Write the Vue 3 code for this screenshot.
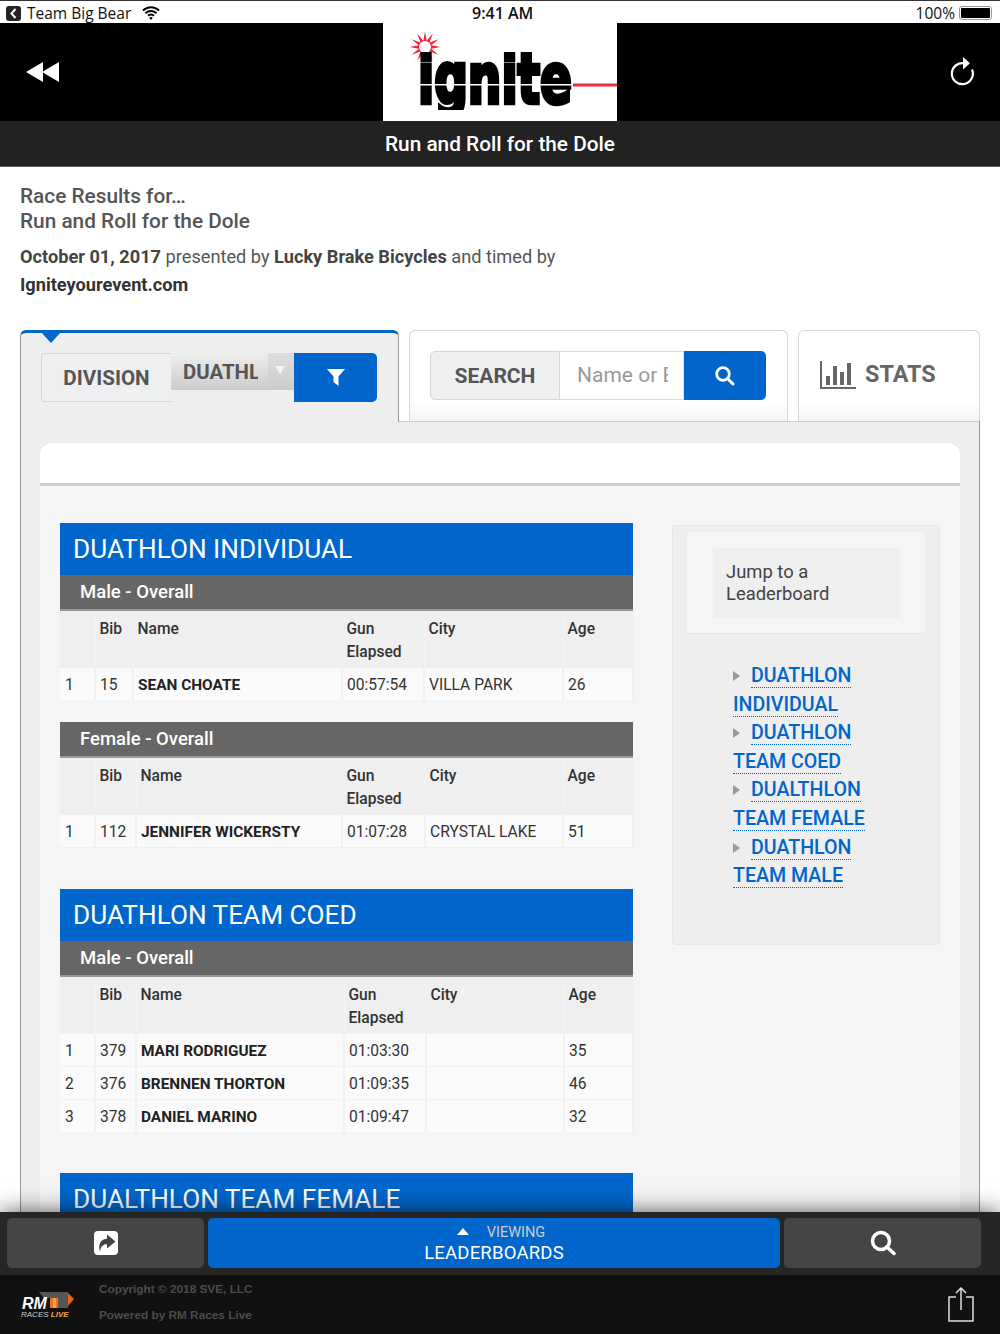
<script setup>
const sections = [
  { title: 'DUATHLON INDIVIDUAL', groups: [
    { name: 'Male - Overall', cols: [35, 38, 209, 82, 139, 70], rows: [['1', '15', 'SEAN CHOATE', '00:57:54', 'VILLA PARK', '26']] },
    { name: 'Female - Overall', cols: [35, 41, 206, 83, 138, 70], rows: [['1', '112', 'JENNIFER WICKERSTY', '01:07:28', 'CRYSTAL LAKE', '51']] }
  ]},
  { title: 'DUATHLON TEAM COED', groups: [
    { name: 'Male - Overall', cols: [35, 41, 208, 82, 138, 69], rows: [
      ['1', '379', 'MARI RODRIGUEZ', '01:03:30', '', '35'],
      ['2', '376', 'BRENNEN THORTON', '01:09:35', '', '46'],
      ['3', '378', 'DANIEL MARINO', '01:09:47', '', '32']
    ]}
  ]},
  { title: 'DUALTHLON TEAM FEMALE', groups: [] }
]
const links = [
  ['DUATHLON', 'INDIVIDUAL'], ['DUATHLON', 'TEAM COED'], ['DUALTHLON', 'TEAM FEMALE'], ['DUATHLON', 'TEAM MALE']
]
const star = Array.from({ length: 24 }, (_, i) => {
  const r = i % 2 ? 6.5 : 15.5
  const a = (i * Math.PI) / 12 - Math.PI / 2
  return `${(42 + r * Math.cos(a)).toFixed(1)},${(24 + r * Math.sin(a)).toFixed(1)}`
}).join(' ')
</script>

<template>
  <div class="screen">
    <div class="status">
      <div class="st-left">
        <span class="back-badge"><svg width="9" height="11" viewBox="0 0 9 11"><path d="M6.5 1 2.5 5.5l4 4.500" fill="none" stroke="#fff" stroke-width="2"/></svg></span>
        <span>Team Big Bear</span>
        <svg class="wifi" width="18" height="14" viewBox="0 0 18 14"><path d="M1 4.500a11.500 11.500 0 0 1 16 0M3.500 7.200a8 8 0 0 1 11 0M6 9.800a4.300 4.300 0 0 1 6 0" fill="none" stroke="#000" stroke-width="2"/><path d="M9 14 7.200 11.800a2.800 2.800 0 0 1 3.600 0z"/></svg>
      </div>
      <div class="st-time">9:41 AM</div>
      <div class="st-right">
        <span>100%</span>
        <span class="battery"><i></i></span>
      </div>
    </div>

    <header class="top">
      <svg class="rew" width="33" height="20" viewBox="0 0 33 20"><path d="M17 0v20L0 10zM33 0v20L16 10z" fill="#fff"/></svg>
      <div class="logo">
        <svg width="234" height="98" viewBox="0 0 234 98">
          <defs><clipPath id="logo-clip"><rect x="0" y="29" width="234" height="58"/></clipPath></defs>
          <polygon fill="#ed2a3c" :points="star"/>
          <circle cx="42" cy="24" r="6" fill="#fff"/>
          <g clip-path="url(#logo-clip)">
            <text class="logo-text" transform="translate(35 80) scale(1 1.5)" textLength="154" lengthAdjust="spacingAndGlyphs">ignite</text>
          </g>
          <rect x="30" y="61" width="162" height="1.500" fill="#fff"/>
          <rect x="190" y="60.500" width="44" height="3" fill="#ed2a3c"/>
        </svg>
      </div>
      <svg class="reload" width="26" height="30" viewBox="0 0 26 30"><path d="M16 6.500A10.500 10.500 0 1 0 23 12.500" fill="none" stroke="#fff" stroke-width="2.200"/><path d="M14 0l7 6.200-7 6.300z" fill="#fff"/></svg>
    </header>
    <div class="title-bar">Run and Roll for the Dole</div>

    <div class="intro">
      <h1>Race Results for…<br>Run and Roll for the Dole</h1>
      <p><b>October 01, 2017</b> presented by <b>Lucky Brake Bicycles</b> and timed by<br><b class="dark">Igniteyourevent.com</b></p>
    </div>

    <div class="tabs">
      <div class="tab tab-active">
        <span class="caret"></span>
        <div class="group">
          <span class="lbl lbl-div">DIVISION</span>
          <span class="select"><span class="sel-txt">DUATHL</span><span class="sel-arrow"><i></i></span></span>
          <span class="btn btn-filter"><svg width="18" height="17" viewBox="0 0 18 17"><path d="M0 0h18l-6.500 7.500V17L6.500 13V7.500z" fill="#fff"/></svg></span>
        </div>
      </div>
      <div class="tab tab-search">
        <div class="group">
          <span class="lbl lbl-search">SEARCH</span>
          <span class="input"><span class="ph">Name or E</span></span>
          <span class="btn btn-search"><svg width="20" height="20" viewBox="0 0 20 20"><circle cx="8" cy="8" r="6.300" fill="none" stroke="#fff" stroke-width="2.800"/><path d="M12.500 12.500 18 18" stroke="#fff" stroke-width="3" stroke-linecap="round"/></svg></span>
        </div>
      </div>
      <div class="tab tab-stats">
        <svg width="36" height="28" viewBox="0 0 36 28"><path d="M1 0v27h35" fill="none" stroke="#666" stroke-width="2"/><path d="M6 15h4v9H6zM13 5h4v19h-4zM20 11h4v13h-4zM27 2h4v22h-4z" fill="#666"/></svg>
        <span>STATS</span>
      </div>
    </div>

    <div class="panel">
      <div class="card-top"></div>
      <div class="body">
        <main class="results">
          <section v-for="s in sections" :key="s.title" class="section">
            <h2>{{ s.title }}</h2>
            <div v-for="g in s.groups" :key="g.name" class="grp">
              <h3>{{ g.name }}</h3>
              <table>
                <colgroup><col v-for="(c, i) in g.cols" :key="i" :style="{ width: c + 'px' }"></colgroup>
                <thead>
                  <tr><th></th><th>Bib</th><th>Name</th><th>Gun<br>Elapsed</th><th>City</th><th>Age</th></tr>
                </thead>
                <tbody>
                  <tr v-for="r in g.rows" :key="r[1]">
                    <td v-for="(v, i) in r" :key="i" :class="{ nm: i === 2 }">{{ v }}</td>
                  </tr>
                </tbody>
              </table>
            </div>
          </section>
        </main>
        <aside class="side">
          <div class="side-head"><div class="side-box">Jump to a<br>Leaderboard</div></div>
          <ul>
            <li v-for="l in links" :key="l[0] + l[1]">
              <i class="tri"></i><a>{{ l[0] }}</a><br><a>{{ l[1] }}</a>
            </li>
          </ul>
        </aside>
      </div>
    </div>

    <div class="dock">
      <div class="actions">
        <div class="act">
          <svg width="24" height="24" viewBox="0 0 24 24"><rect width="24" height="24" rx="4" fill="#fff"/><path d="M13 3.500 21.500 10.500 13 17.500v-4.300c-3.500 0-6 1.300-7 7.300C3.500 13 7.500 7.800 13 7.800z" fill="#444"/></svg>
        </div>
        <div class="act act-main">
          <div class="view"><i class="up"></i><span>VIEWING</span></div>
          <div class="lead">LEADERBOARDS</div>
        </div>
        <div class="act">
          <svg width="26" height="26" viewBox="0 0 26 26"><circle cx="11" cy="11" r="8.500" fill="none" stroke="#fff" stroke-width="3.500"/><path d="M17 17l7 6.500" stroke="#fff" stroke-width="3.500" stroke-linecap="round"/></svg>
        </div>
      </div>
      <footer>
        <div class="rm">
          <svg class="rm-mark" width="40" height="22" viewBox="0 0 40 22"><path d="M3 2h29v16H14V8H8z" fill="#555"/><path d="M14 8h8v10h-8z" fill="#e8741c"/><path d="M17 8h3v10h-3z" fill="#f2a23a"/><path d="M32 3l6 6-6 7z" fill="#e8641c"/></svg>
          <span class="rm-t">RM</span>
          <span class="rm-s">RACES <em>LIVE</em></span>
        </div>
        <div class="copy">
          <div>Copyright © 2018 SVE, LLC</div>
          <div>Powered by RM Races Live</div>
        </div>
        <svg class="share" width="26" height="35" viewBox="0 0 26 35"><path d="M8 10H1v24h24V10h-7" fill="none" stroke="#ddd" stroke-width="1.500"/><path d="M13 23V1M8 6l5-5 5 5" fill="none" stroke="#ddd" stroke-width="1.500"/></svg>
      </footer>
    </div>
  </div>
</template>

<style scoped>
.screen { position: relative; width: 1000px; height: 1334px; overflow: hidden; background: #fff; font-family: Roboto, sans-serif; color: #444; }
.status { border-top: 1px solid #333; display: flex; align-items: center; justify-content: space-between; padding: 2px 8px 0 6px; height: 20px; font-family: "Open Sans", Roboto, sans-serif; font-size: 15.500px; color: #111; position: relative; }
.st-left { display: flex; align-items: center; gap: 6px; }
.back-badge { width: 15px; height: 15px; border-radius: 3px; background: #222; display: flex; align-items: center; justify-content: center; }
.wifi { margin-left: 5px; }
.st-time { position: absolute; left: 472px; font-weight: 600; font-size: 16px; }
.st-right { display: flex; align-items: center; gap: 4px; }
.battery { width: 33px; height: 14px; border: 1px solid #999; border-radius: 3px; padding: 1px; box-sizing: border-box; display: block; }
.battery i { display: block; width: 100%; height: 100%; background: #000; border-radius: 1px; }
.top { height: 98px; background: #000; display: grid; grid-template-columns: 1fr 234px 1fr; align-items: center; padding: 0 25px 0 26px; }
.logo { width: 234px; height: 98px; background: #fff; position: relative; left: -0.5px; }
.reload { justify-self: end; }
.logo svg { display: block; }
.logo-text { font-family: "DejaVu Sans", sans-serif; font-weight: 700; font-size: 46px; fill: #000; stroke: #000; stroke-width: 3px; }
.title-bar { height: 46px; background: #222; color: #fff; display: flex; align-items: center; justify-content: center; font-size: 20.800px; font-weight: 500; box-sizing: border-box; border-bottom: 1px solid #555; }
.intro { padding: 17px 20px 0; height: 163px; box-sizing: border-box; }
.intro h1 { margin: 0; font-size: 20.800px; font-weight: 500; line-height: 25px; color: #555; }
.intro p { margin: 9px 0 0; font-size: 18.200px; line-height: 27.500px; color: #555; }
.intro b { font-weight: 700; color: #444; }
.intro b.dark { color: #333; }
.tabs { display: flex; gap: 10px; padding: 0 20px; height: 91px; }
.tab { position: relative; z-index: 1; box-sizing: border-box; border: 1px solid #d5d5d5; border-bottom: 0; border-radius: 6px 6px 0 0; height: 91px; background: linear-gradient(#fff 80%, #f4f4f4); }
.tab-active { width: 379px; height: 92px; background: #eee; border: 1px solid #999; border-top: 3px solid #0066cc; border-bottom: 0; }
.tab-search { width: 379px; }
.tab-stats { width: 182px; display: flex; align-items: flex-start; gap: 9px; padding: 30px 0 0 21px; font-size: 23.400px; font-weight: 700; color: #666; line-height: 27px; }
.caret { position: absolute; left: 20px; top: -1px; border: 10px solid transparent; border-top: 11px solid #0066cc; border-bottom: 0; }
.group { display: flex; align-items: flex-start; position: absolute; left: 20px; top: 20px; }
.lbl { box-sizing: border-box; height: 49px; display: flex; align-items: center; justify-content: center; background: #eeeff1; border: 1px solid #d5d5d5; font-weight: 700; color: #555; width: 130px; }
.lbl-div { border-right: 0; border-radius: 4px 0 0 4px; font-size: 20.600px; }
.lbl-search { border-radius: 5px 0 0 5px; font-size: 21px; }
.select { width: 123px; height: 37px; display: flex; background: linear-gradient(#eee, #ccc); font-size: 20.400px; font-weight: 700; color: #555; }
.sel-txt { width: 87px; padding-left: 12px; box-sizing: border-box; overflow: hidden; white-space: nowrap; line-height: 38px; height: 37px; }
.sel-arrow { flex: 1; margin-left: 10px; background: linear-gradient(#ddd, #ccc); display: block; position: relative; }
.sel-arrow i { position: absolute; left: 7px; top: 13px; border: 5px solid transparent; border-top: 8px solid #f4f4f4; border-bottom: 0; }
.btn { height: 49px; background: #0066cc; display: flex; align-items: center; justify-content: center; border-radius: 0 5px 5px 0; }
.btn-filter { width: 83px; }
.input { width: 124px; height: 49px; box-sizing: border-box; background: #fff; border: 1px solid #ddd; border-left: 0; display: block; padding-left: 17px; line-height: 47px; font-size: 21px; color: #999; overflow: hidden; white-space: nowrap; }
.ph { display: block; width: 91px; overflow: hidden; }
.btn-search { width: 82px; }
.panel { position: relative; z-index: 0; margin: 0 20px; height: 800px; box-sizing: border-box; background: #eee; border: 1px solid #999; border-top: 0; padding: 22px 19px 0; box-shadow: inset 0 1px 0 #ccc; }
.card-top { height: 43px; box-sizing: border-box; background: #fff; border-radius: 12px 12px 0 0; border-bottom: 3px solid #ccc; box-shadow: 0 -1px 0 #e8e8e8; }
.body { display: flex; align-items: flex-start; background: #f5f5f5; padding: 37px 20px 0; height: 720px; }
.results { width: 573px; flex: none; }
.section { margin-bottom: 41px; }
.section:nth-child(2) { margin-bottom: 40px; }
h2 { margin: 0; height: 52px; background: #0066cc; color: #fff; font-size: 26.200px; font-weight: 400; line-height: 53px; padding-left: 13px; }
.grp { margin-bottom: 21px; }
.grp:last-child { margin-bottom: 0; }
h3 { margin: 0; height: 36px; box-sizing: border-box; background: #666; border-bottom: 2px solid #999; color: #fff; font-size: 18.500px; font-weight: 500; line-height: 35px; padding-left: 20px; }
table { border-collapse: collapse; table-layout: fixed; width: 573px; font-size: 15.600px; color: #333; }
th { background: #efefef; border-right: 1px solid #f3f3f3; font-weight: 500; text-align: left; vertical-align: top; line-height: 23px; padding: 7px 4px 4px; height: 46px; box-sizing: content-box; }
td { background: #fafafa; height: 32px; padding: 2px 4px 0; box-sizing: border-box; border: 1px solid #f1f1f1; border-width: 0 2px 1px 0; line-height: 30px; }
td:first-child { padding-left: 5px; }
td.nm { font-weight: 700; font-size: 15.400px; color: #222; }
.side { margin-left: 39px; width: 268px; height: 420px; box-sizing: border-box; margin-top: 2px; background: #eee; border: 1px solid #e6e6e6; border-radius: 4px; padding: 6px 14px 0; }
.side-head { background: #f5f5f5; height: 102px; padding: 16px 26px 0; box-sizing: border-box; border-radius: 4px 4px 0 0; border-bottom: 1px solid #e8e8e8; }
.side-box { background: #efefef; width: 187px; height: 70px; box-sizing: border-box; padding: 13px; font-size: 18.400px; line-height: 22px; color: #444; }
.side ul { list-style: none; margin: 28px 0 0; padding: 0 0 0 46px; font-size: 19.600px; font-weight: 500; line-height: 28.600px; color: #0066cc; }
.side a { color: #0066cc; border-bottom: 1px dotted #0066cc; }
.tri { display: inline-block; border: 5.500px solid transparent; border-left: 7px solid #999; border-right: 0; margin-right: 11px; vertical-align: 1px; }
.dock { position: absolute; left: 0; right: 0; bottom: 0; box-shadow: 0 0 22px rgba(0, 0, 0, .65); }
.actions { height: 63px; background: #262626; box-sizing: border-box; padding: 6px 19px 7px 7px; display: flex; gap: 4px; }
.act { width: 197px; height: 50px; background: #454545; border-radius: 5px; display: flex; align-items: center; justify-content: center; flex-direction: column; }
.act-main { width: 572px; background: #0066cc; color: #fff; }
.view { display: flex; align-items: center; gap: 18px; font-size: 14.500px; color: #ccc; line-height: 17px; margin: 3px 0 0 14px; }
.up { display: block; border: 6px solid transparent; border-bottom: 7px solid #fff; border-top: 0; margin-bottom: 3px; }
.lead { font-size: 18.500px; line-height: 24px; letter-spacing: .2px; }
footer { position: relative; height: 59px; background: #111; display: flex; align-items: flex-start; }
.rm { position: relative; width: 99px; height: 59px; flex: none; }
.rm-mark { position: absolute; left: 36px; top: 15px; }
.rm-t { position: absolute; left: 22px; top: 19px; font: italic 700 16px/20px "Liberation Sans", sans-serif; color: #fff; }
.rm-s { position: absolute; left: 21px; top: 34px; font: italic 400 8px/11px "Liberation Sans", sans-serif; color: #ccc; }
.rm-s em { color: #f2a23a; font-weight: 700; }
.copy { font: 700 11.800px/26px "Liberation Sans", sans-serif; color: #4c4c4c; padding-top: 1px; }
.share { position: absolute; left: 948px; top: 12px; }
</style>
